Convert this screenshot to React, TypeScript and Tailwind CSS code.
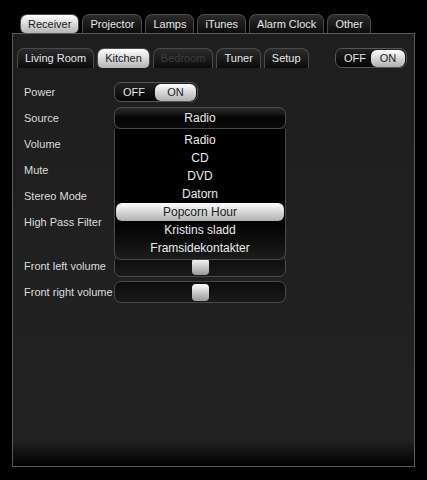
import React, { useState } from 'react';

const topTabs = ['Receiver', 'Projector', 'Lamps', 'iTunes', 'Alarm Clock', 'Other'];
const subTabs = [
  { name: 'Living Room' },
  { name: 'Kitchen' },
  { name: 'Bedroom', disabled: true },
  { name: 'Tuner' },
  { name: 'Setup' },
];
const sources = ['Radio', 'CD', 'DVD', 'Datorn', 'Popcorn Hour', 'Kristins sladd', 'Framsidekontakter'];

const Tab: React.FC<{ label: string; active?: boolean; disabled?: boolean; h: string }> = ({ label, active, disabled, h }) => (
  <div
    className={`${h} px-[7px] flex items-center rounded-t-[7px] border border-b-0 border-[#4a4a4a] text-[11px] leading-none ${
      active
        ? 'bg-linear-to-b from-white to-[#b4b4b4] text-[#1a1a1a] rounded-b-[5px] border-[#2c2c2c]'
        : 'bg-linear-to-b from-[#2c2c2c] to-[#0c0c0c]'
    } ${disabled ? 'text-[#3e3e3e]' : active ? '' : 'text-[#e6e6e6]'}`}
  >
    {label}
  </div>
);

const Toggle: React.FC<{ on: boolean; w: string; pill: string }> = ({ on, w, pill }) => (
  <div className={`${w} h-[20px] flex items-center justify-between rounded-[7px] border border-[#555] bg-linear-to-b from-[#222] to-[#050505] text-[11px] leading-none pl-[8px] pr-[1px]`}>
    <span className="text-[#e6e6e6]">OFF</span>
    <span
      className={`${pill} h-[17px] flex items-center justify-center rounded-[6px] ${
        on ? 'bg-linear-to-b from-white to-[#b0b0b0] text-[#222]' : 'text-[#e6e6e6]'
      }`}
    >
      ON
    </span>
  </div>
);

const Slider: React.FC = () => (
  <div className="w-[172px] h-[22px] rounded-[7px] border border-[#484848] bg-linear-to-b from-[#0c0c0c] to-[#1a1a1a] flex items-center justify-center">
    <div className="w-[17px] h-[17px] rounded-[4px] bg-linear-to-b from-white to-[#9a9a9a]" />
  </div>
);

const Row: React.FC<{ label: string; tall?: boolean; children?: React.ReactNode }> = ({ label, tall, children }) => (
  <div className={`flex ${tall ? 'h-[44px] items-start pt-[2px]' : 'h-[26px] items-center'}`}>
    <div className={`w-[90px] text-[11px] text-[#dcdcdc] ${tall ? 'leading-[22px]' : ''}`}>{label}</div>
    {children}
  </div>
);

export default function App() {
  const [source] = useState('Radio');

  return (
    <div className="min-h-[480px] bg-black pt-[14px] px-[12px] font-['Liberation_Sans',Arial,sans-serif]">
      {/* main tabs */}
      <div className="flex gap-[3px] pl-[8px]">
        {topTabs.map((t, i) => (
          <Tab key={t} label={t} active={i === 0} h="h-[19px]" />
        ))}
      </div>

      <div className="h-[434px] border border-[#5a5a5a] bg-[linear-gradient(to_bottom,#1e1e1e_0%,#222222_94%,#000000_100%)] pt-[14px]">
        {/* room tabs */}
        <div className="flex items-end pl-[4px] pr-[7px]">
          <div className="flex gap-[3px]">
            {subTabs.map((t) => (
              <Tab key={t.name} label={t.name} active={t.name === 'Kitchen'} disabled={t.disabled} h="h-[20px]" />
            ))}
          </div>
          <div className="ml-auto">
            <Toggle on w="w-[72px]" pill="w-[34px]" />
          </div>
        </div>

        {/* settings */}
        <div className="mt-[11px] pl-[11px]">
          <Row label="Power">
            <Toggle on w="w-[84px]" pill="w-[41px]" />
          </Row>
          <Row label="Source">
            <div className="relative w-[172px]">
              <div className="h-[22px] rounded-[7px] border border-[#4a4a4a] bg-linear-to-b from-[#2e2e2e] via-[#050505] to-[#0a0a0a] flex items-center justify-center text-[12px] text-[#eaeaea]">
                {source}
              </div>
              {/* open dropdown */}
              <div className="absolute left-0 top-full w-[172px] h-[131px] z-10 rounded-b-[7px] border border-t-0 border-[#4a4a4a] bg-linear-to-b from-black via-black to-[#1c1c1c] pt-[2px] px-[1px]">
                {sources.map((s) => (
                  <div
                    key={s}
                    className={`h-[18px] flex items-center justify-center text-[12px] ${
                      s === 'Popcorn Hour'
                        ? 'rounded-[6px] bg-linear-to-b from-white to-[#b0b0b0] text-[#222]'
                        : 'text-[#eaeaea]'
                    }`}
                  >
                    {s}
                  </div>
                ))}
              </div>
            </div>
          </Row>
          <Row label="Volume">
            <Slider />
          </Row>
          <Row label="Mute">
            <Toggle on={false} w="w-[84px]" pill="w-[41px]" />
          </Row>
          <Row label="Stereo Mode">
            <div className="w-[172px] h-[22px] rounded-[7px] border border-[#4a4a4a]" />
          </Row>
          <Row label="High Pass Filter" tall>
            <Slider />
          </Row>
          <Row label="Front left volume">
            <Slider />
          </Row>
          <Row label="Front right volume">
            <Slider />
          </Row>
        </div>
      </div>
    </div>
  );
}
